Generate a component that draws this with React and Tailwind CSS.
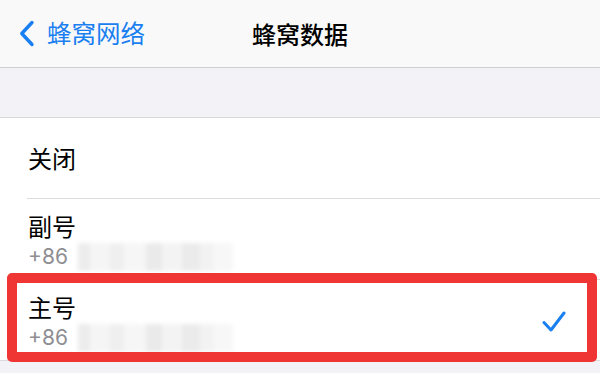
const cjk = { fontFamily: '"Noto Sans CJK SC", "Noto Sans", sans-serif' };
const latin = { fontFamily: 'Inter, "Noto Sans", "Noto Sans CJK SC", sans-serif' };

// pixelated phone number, kept soft and light like the mosaic in the shot
const BlurredNumber = () => (
  <div className="flex h-[28px] w-[155px] blur-[2px]">
    <div className="w-[12px] bg-[#ececec]" />
    <div className="w-[20px] bg-[#f5f5f5]" />
    <div className="w-[14px] bg-[#efefef]" />
    <div className="w-[22px] bg-[#f6f6f6]" />
    <div className="w-[16px] bg-[#eaeaea]" />
    <div className="w-[20px] bg-[#f3f3f3]" />
    <div className="w-[18px] bg-[#ebebeb]" />
    <div className="w-[14px] bg-[#f2f2f2]" />
    <div className="w-[19px] bg-[#f7f7f7]" />
  </div>
);

const PhoneRow = ({ label }) => (
  <div className="flex h-[80px] flex-col pl-[28px] pt-[14px]">
    <div className="text-[24px] leading-[26px] text-black" style={cjk}>
      {label}
    </div>
    <div className="mt-[4px] flex items-center gap-[10px]">
      <span className="text-[21px] leading-[28px] text-[#8e8e93]" style={latin}>
        +86
      </span>
      <BlurredNumber />
    </div>
  </div>
);

export default function App() {
  return (
    <div className="h-[373px] w-[600px] overflow-hidden bg-[#f2f2f7]">
      <header className="grid h-[68px] grid-cols-[1fr_auto_1fr] items-center border-b border-[#cfcfd3] bg-[#f9f9f9]">
        <div className="flex items-center pl-[19px] text-[#1a7ff0]">
          <svg width="16" height="27" viewBox="0 0 16 27" fill="none">
            <path
              d="M13 2.5L2.8 13.5L13 24.5"
              stroke="currentColor"
              strokeWidth="3.4"
              strokeLinecap="round"
              strokeLinejoin="round"
            />
          </svg>
          <span className="ml-[12px] text-[24.5px] leading-none" style={cjk}>
            蜂窝网络
          </span>
        </div>
        <h1 className="text-[24px] font-medium leading-none text-black" style={cjk}>
          蜂窝数据
        </h1>
        <div />
      </header>

      <div className="h-[50px] border-b border-[#d8d8dc]" />

      <div className="bg-white">
        <div className="flex h-[80px] items-center pl-[28px]">
          <span className="text-[24px] text-black" style={cjk}>
            关闭
          </span>
        </div>
        <div className="ml-[27px] h-px bg-[#dcdce0]" />
        <PhoneRow label="副号" />
        <div className="ml-[27px] h-px bg-[#dcdce0]" />
        <div className="relative">
          <PhoneRow label="主号" />
          <svg
            className="absolute right-[34px] top-[30px]"
            width="24"
            height="24"
            viewBox="0 0 24 24"
            fill="none"
          >
            <path
              d="M2 12.5L9 20L22 3"
              stroke="#1a7ff0"
              strokeWidth="3"
              strokeLinecap="round"
              strokeLinejoin="round"
            />
          </svg>
          {/* red highlight frame drawn over the selected row */}
          <div className="pointer-events-none absolute bottom-[-2px] left-[7px] right-[3px] top-[-7px] rounded-[5px] border-[10px] border-[#f03535]" />
        </div>
      </div>
      <div className="h-px bg-[#dcdce0]" />
    </div>
  );
}
